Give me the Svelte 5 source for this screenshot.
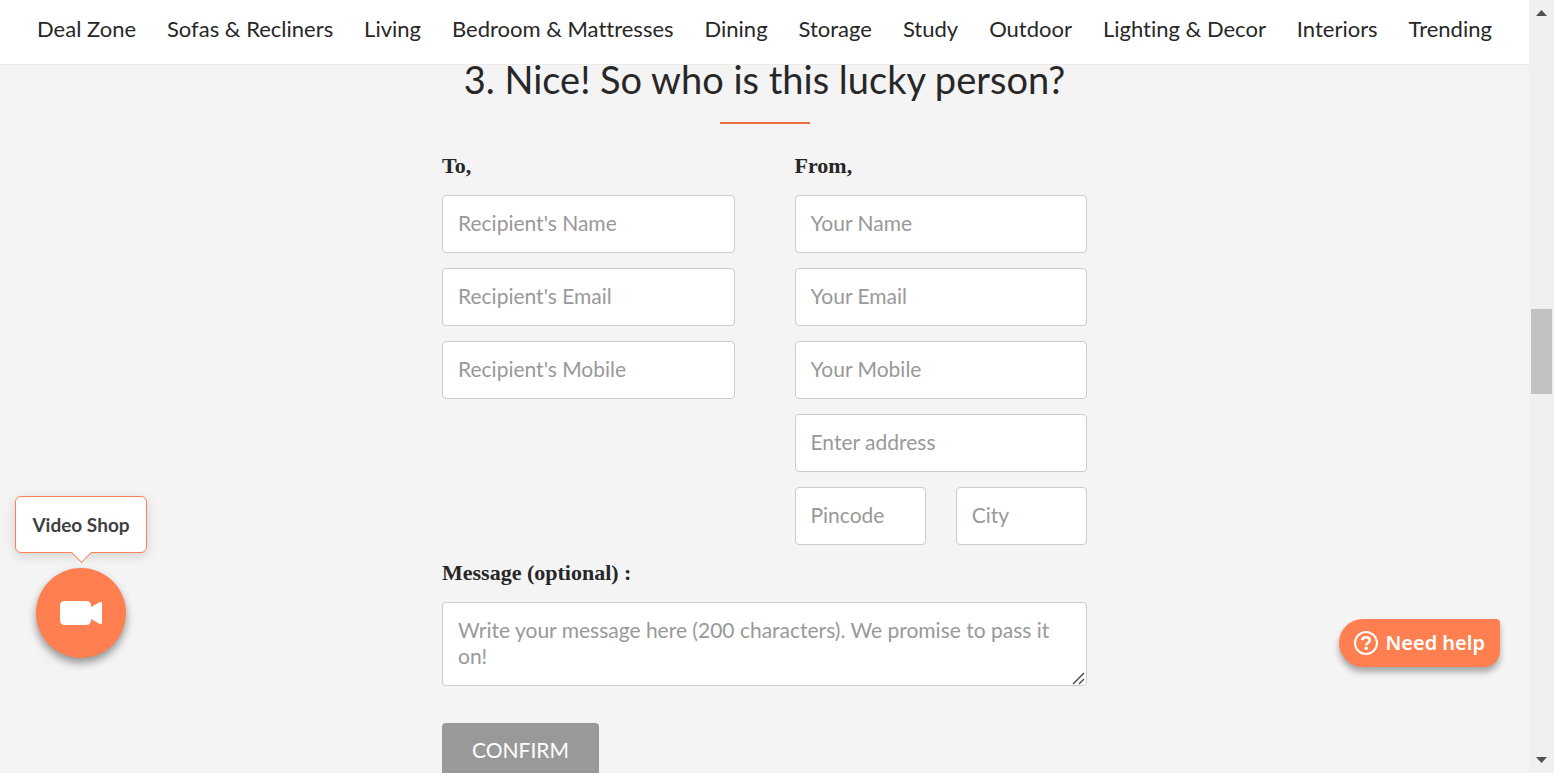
<script>
  const links = [
    'Deal Zone', 'Sofas & Recliners', 'Living', 'Bedroom & Mattresses', 'Dining', 'Storage',
    'Study', 'Outdoor', 'Lighting & Decor', 'Interiors', 'Trending'
  ];
  const thumb = { top: 39.3, size: 11.8 };
</script>

<div class="window">
  <div class="page">
    <header>
      <nav aria-label="Categories">
        {#each links as link}
          <a href="#top">{link}</a>
        {/each}
      </nav>
    </header>

    <main>
      <h2>3. Nice! So who is this lucky person?</h2>
      <form onsubmit={(e) => e.preventDefault()}>
        <div class="columns">
          <section class="group">
            <h3>To,</h3>
            <input type="text" placeholder="Recipient's Name" aria-label="Recipient's Name" />
            <input type="email" placeholder="Recipient's Email" aria-label="Recipient's Email" />
            <input type="tel" placeholder="Recipient's Mobile" aria-label="Recipient's Mobile" />
          </section>
          <section class="group">
            <h3>From,</h3>
            <input type="text" placeholder="Your Name" aria-label="Your Name" />
            <input type="email" placeholder="Your Email" aria-label="Your Email" />
            <input type="tel" placeholder="Your Mobile" aria-label="Your Mobile" />
            <input type="text" placeholder="Enter address" aria-label="Enter address" />
            <div class="pair">
              <input type="text" placeholder="Pincode" aria-label="Pincode" />
              <input type="text" placeholder="City" aria-label="City" />
            </div>
          </section>
        </div>
        <div class="group message">
          <label for="message">Message (optional) :</label>
          <div class="area">
            <textarea id="message" rows="2" maxlength="200" placeholder="Write your message here (200 characters). We promise to pass it on!"></textarea>
            <svg class="grip" width="13" height="13" viewBox="0 0 13 13" aria-hidden="true">
              <path d="M1 12 12 1M7 12 12 7" stroke="#505050" stroke-width="1.500" fill="none" />
            </svg>
          </div>
        </div>
        <button class="confirm" type="submit">CONFIRM</button>
      </form>
    </main>

    <div class="video">
      <div class="bubble" id="video-label">Video Shop</div>
      <button class="camera" type="button" aria-labelledby="video-label">
        <svg width="42" height="24" viewBox="0 0 42 24" aria-hidden="true">
          <rect width="31" height="24" rx="4.500" fill="#fff" />
          <path d="M30.500 6.200 39.500 1.300Q42 .2 42 2.600V21.400Q42 23.800 39.500 22.700L30.500 17.800Z" fill="#fff" />
        </svg>
      </button>
    </div>

    <button class="help" type="button">
      <svg width="24" height="24" viewBox="0 0 24 24" fill="none" stroke="#fff" aria-hidden="true">
        <circle cx="12" cy="12" r="11" stroke-width="2" />
        <path d="M8.200 9.200C8.500 7 10.200 6.300 12 6.300C14.200 6.300 15.800 7.500 15.800 9.300C15.800 11.700 12.300 11.700 12.300 14.200" stroke-width="2.600" />
        <circle cx="12.200" cy="17.400" r="1.800" fill="#fff" stroke="none" />
      </svg>
      <span>Need help</span>
    </button>
  </div>

  <div class="scrollbar" aria-hidden="true">
    <svg width="25" height="25" viewBox="0 0 25 25"><path d="M7 16h11l-5.500-6z" fill="#505050" /></svg>
    <div class="track">
      <div class="thumb" style="top: {thumb.top}%; height: {thumb.size}%"></div>
    </div>
    <svg width="25" height="25" viewBox="0 0 25 25"><path d="M7 9h11l-5.500 6z" fill="#505050" /></svg>
  </div>
</div>

<style>
  .window {
    display: flex;
    height: 100vh;
    overflow: hidden;
    background: #f4f4f4;
    color: #272727;
    font-family: Lato, sans-serif;
    font-size: 20px;
    font-variant-ligatures: none;
  }
  .window * { box-sizing: border-box; }
  .page {
    position: relative;
    flex: 1;
    min-width: 0;
    overflow: hidden;
  }
  header {
    background: #fff;
    border-bottom: 1px solid #ebebeb;
  }
  nav {
    display: flex;
    justify-content: space-between;
    padding: 15px 37px 21px;
  }
  nav a {
    color: inherit;
    font-size: 22px;
    line-height: 28px;
    text-decoration: none;
    white-space: nowrap;
  }
  h2 {
    margin: 0;
    font-size: 38px;
    font-weight: 400;
    line-height: 28px;
    text-align: center;
  }
  h2::after {
    content: '';
    display: block;
    width: 90px;
    height: 2px;
    margin: 29px auto 0;
    background: #e8703c;
  }
  form {
    max-width: 645px;
    margin: 28px auto 0;
  }
  .columns {
    display: grid;
    grid-template-columns: 1fr 1fr;
    gap: 60px;
  }
  .group {
    display: flex;
    flex-direction: column;
    gap: 15px;
    min-width: 0;
  }
  .pair {
    display: grid;
    grid-template-columns: 1fr 1fr;
    gap: 30px;
  }
  h3, label {
    margin: 0;
    font-family: 'Liberation Serif', serif;
    font-size: 22px;
    font-weight: 700;
    line-height: 28px;
  }
  input, textarea {
    display: block;
    width: 100%;
    min-width: 0;
    margin: 0;
    border: 1px solid #ccc;
    border-radius: 4px;
    background: #fff;
    color: #272727;
    font-family: inherit;
    font-size: 21px;
    line-height: 26px;
    padding: 14px 15px 17px;
  }
  input { height: 58px; }
  textarea { height: 84px; resize: none; overflow: hidden; }
  input::placeholder, textarea::placeholder {
    color: #999;
    opacity: 1;
  }
  .message { margin-top: 14px; }
  .area { position: relative; }
  .grip {
    position: absolute;
    right: 2px;
    bottom: 1px;
  }
  .confirm {
    display: block;
    margin-top: 37px;
    padding: 13px 30px 17px;
    border: 0;
    border-radius: 4px;
    background: #999;
    color: #fff;
    font-family: inherit;
    font-size: 21px;
    line-height: 28px;
  }
  .video {
    position: absolute;
    left: 15px;
    bottom: 115px;
    display: flex;
    flex-direction: column;
    align-items: center;
    gap: 15px;
  }
  .bubble {
    position: relative;
    min-width: 132px;
    padding: 14px 15px;
    border: 1px solid #ff7f50;
    border-radius: 6px;
    background: #fff;
    box-shadow: 0 3px 12px rgba(0, 0, 0, 0.14);
    color: #3f3f3f;
    font-size: 19px;
    font-weight: 700;
    line-height: 27px;
    text-align: center;
    white-space: nowrap;
  }
  .bubble::after {
    content: '';
    position: absolute;
    left: 50%;
    bottom: -8px;
    width: 14px;
    height: 14px;
    margin-left: -7px;
    border: solid #ff7f50;
    border-width: 0 1px 1px 0;
    background: #fff;
    transform: rotate(45deg);
  }
  .camera {
    display: flex;
    align-items: center;
    justify-content: center;
    width: 90px;
    height: 90px;
    padding: 0;
    border: 0;
    border-radius: 50%;
    background: #ff7f50;
    box-shadow: 0 5px 8px rgba(0, 0, 0, 0.4);
  }
  .help {
    position: absolute;
    right: 29px;
    bottom: 106px;
    display: flex;
    align-items: center;
    gap: 7px;
    padding: 10px 15px;
    border: 0;
    border-radius: 24px 4px 16px 24px;
    background: #ff7f50;
    box-shadow: 0 5px 6px rgba(0, 0, 0, 0.32);
    color: #fff;
    font-family: 'Noto Sans', sans-serif;
    font-size: 20px;
    font-weight: 600;
    line-height: 28px;
    white-space: nowrap;
  }
  .scrollbar {
    display: flex;
    flex-direction: column;
    width: 25px;
    background: #f0f0f0;
  }
  .track {
    position: relative;
    flex: 1;
  }
  .thumb {
    position: absolute;
    left: 2px;
    right: 2px;
    background: #c1c1c1;
  }
</style>
